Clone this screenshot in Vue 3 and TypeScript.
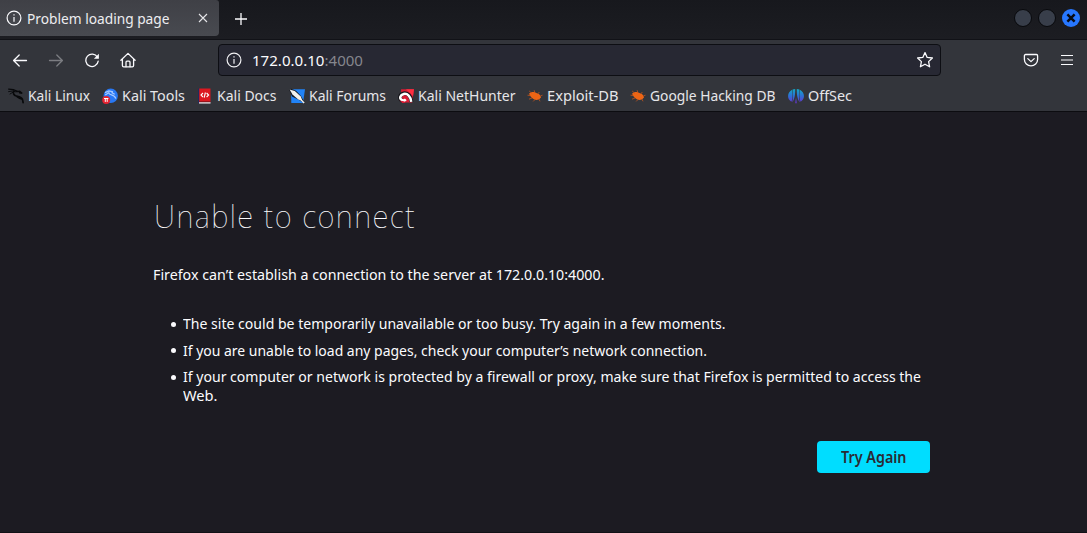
<script setup lang="ts">
import type { Directive } from 'vue'

interface Bookmark {
  id: string
  label: string
  width: number
  slot: number
}

const bookmarks: Bookmark[] = [
  { id: 'linux', label: 'Kali Linux', width: 62, slot: 93.5 },
  { id: 'tools', label: 'Kali Tools', width: 63, slot: 95.5 },
  { id: 'docs', label: 'Kali Docs', width: 59.5, slot: 92 },
  { id: 'forums', label: 'Kali Forums', width: 77, slot: 109 },
  { id: 'hunter', label: 'Kali NetHunter', width: 97.5, slot: 129 },
  { id: 'bug', label: 'Exploit-DB', width: 71.5, slot: 103 },
  { id: 'bug', label: 'Google Hacking DB', width: 125.5, slot: 158 },
  { id: 'offsec', label: 'OffSec', width: 44, slot: 76 },
]

const hints = [
  [{ text: 'The site could be temporarily unavailable or too busy. Try again in a few moments.', width: 542.5 }],
  [{ text: 'If you are unable to load any pages, check your computer’s network connection.', width: 524 }],
  [
    { text: 'If your computer or network is protected by a firewall or proxy, make sure that Firefox is permitted to access the', width: 738 },
    { text: 'Web.', width: 34.5 },
  ],
]

// Condenses a line of text horizontally to the given advance width.
const vFit: Directive<HTMLElement, number> = {
  mounted(el, { value }) {
    const natural = el.getBoundingClientRect().width
    if (natural > 0) el.style.transform = `scaleX(${value / natural})`
  },
}
</script>

<template>
  <div class="window">
    <header class="tabs">
      <div class="tab">
        <svg class="tab-info" width="16" height="16" viewBox="0 0 16 16" fill="none" stroke="#fbfbfe" stroke-width="1.2">
          <circle cx="8" cy="8" r="6.9" /><path d="M8 7v4.8M8 4.2v1.4" />
        </svg>
        <span class="tab-title"><span v-fit="142.5" class="fit">Problem loading page</span></span>
        <svg class="tab-close" width="10" height="10" viewBox="0 0 10 10" stroke="#e6e6e9" stroke-width="1.1">
          <path d="M1 1l8 8M9 1L1 9" />
        </svg>
      </div>
      <svg class="new-tab" width="14" height="14" viewBox="0 0 14 14" stroke="#fbfbfe" stroke-width="1.3">
        <path d="M7 1v12M1 7h12" />
      </svg>
      <div class="controls">
        <i class="control"></i>
        <i class="control"></i>
        <svg width="18" height="18" viewBox="0 0 18 18">
          <circle cx="9" cy="9" r="9" fill="#2777ff" />
          <path d="M5.4 5.4l7.2 7.2M12.6 5.4l-7.2 7.2" stroke="#080b14" stroke-width="2.5" />
        </svg>
      </div>
    </header>

    <nav class="toolbar">
      <div class="nav-row">
        <svg class="back" width="16" height="16" viewBox="0 0 16 16" fill="none" stroke="#fbfbfe" stroke-width="1.3" stroke-linecap="round" stroke-linejoin="round">
          <path d="M14.5 8.5H1.8M7.2 3L1.6 8.5 7.2 14" />
        </svg>
        <svg class="forward" width="16" height="16" viewBox="0 0 16 16" fill="none" stroke="#7c7d82" stroke-width="1.3" stroke-linecap="round" stroke-linejoin="round">
          <path d="M1.5 8.5h12.7M8.8 3l5.6 5.5L8.8 14" />
        </svg>
        <svg class="reload" width="16" height="16" viewBox="0 0 16 16" fill="none" stroke="#fbfbfe" stroke-width="1.3">
          <path d="M13.4 5.2A6.2 6.2 0 1 0 14.2 9.2" stroke-linecap="round" />
          <path d="M14.9 1.8v5h-5z" fill="#fbfbfe" stroke="none" />
        </svg>
        <svg class="home" width="16" height="16" viewBox="0 0 16 16" fill="none" stroke="#fbfbfe" stroke-width="1.3" stroke-linejoin="round" stroke-linecap="round">
          <path d="M.9 8.2L8 1.4l7.1 6.8M2.4 7.3v6.3c0 .9.4 1.3 1.3 1.3h8.6c.9 0 1.3-.4 1.3-1.3V7.3" />
          <path d="M6 14.7v-4.4c0-.7.4-1.1 1-1.1h2c.6 0 1 .4 1 1.1v4.4" />
        </svg>
        <div class="urlbar">
          <svg class="site-info" width="16" height="16" viewBox="0 0 16 16" fill="none" stroke="#f0f0f3" stroke-width="1.2">
            <circle cx="8" cy="8" r="6.9" /><path d="M8 7v4.8M8 4.2v1.4" />
          </svg>
          <span class="address"><span v-fit="111" class="fit">172.0.0.10<span class="port">:4000</span></span></span>
          <svg class="star" width="18" height="18" viewBox="0 0 18 18" fill="none" stroke="#fbfbfe" stroke-width="1.3" stroke-linejoin="round">
            <path d="M9 1.6l2.2 4.8 5.2.6-3.8 3.6 1 5.2L9 13.2l-4.6 2.6 1-5.2L1.6 7l5.2-.6z" />
          </svg>
        </div>
        <svg class="pocket" width="16" height="16" viewBox="0 0 16 16" fill="none" stroke="#fbfbfe" stroke-width="1.3" stroke-linecap="round" stroke-linejoin="round">
          <path d="M2.6 2.5h10.8c.7 0 1.2.5 1.2 1.2V7.5a6.6 6.3 0 0 1-13.2 0V3.7c0-.7.5-1.2 1.2-1.2z" /><path d="M4.8 6.6L8 9.6l3.2-3" />
        </svg>
        <svg class="menu" width="12" height="12" viewBox="0 0 12 12" stroke="#fbfbfe" stroke-width="1.2">
          <path d="M0 1.5h12M0 6h12M0 10.5h12" />
        </svg>
      </div>

      <div class="bookmarks">
        <div v-for="item in bookmarks" :key="item.label" class="bookmark" :style="{ width: item.slot + 'px' }">
          <svg class="favicon" width="16" height="16" viewBox="0 0 16 16">
            <g v-if="item.id === 'linux'" fill="none" stroke="#08090b" stroke-linecap="round">
              <path d="M.6 1.2l4.8.4 4 1.6" stroke-width="1.2" />
              <path d="M.6 3.6l4-.6 3 .8M2 6l3-1.8" stroke-width=".9" />
              <path d="M5.8 3C5 5.4 5.6 7.4 8.2 8c2.8.6 5 .6 6.2 3.2.4 1 .6 2.2.7 3.4" stroke-width="1.7" />
              <path d="M8.4 3.6l3.2-.3 2.6 2-2.6-.5M9 8.6c1.5 1.2 3.3 2.2 4.6 2.4" stroke-width="1.4" />
            </g>
            <g v-else-if="item.id === 'tools'">
              <circle cx="8.7" cy="7.8" r="7.2" fill="#2878f4" />
              <path d="M3 4.6l4-1.7 4 .9M3.2 7l3.6-2.2c.6 3 5.8 1 7 5.9M9.5 4.4l3.2 1.8" fill="none" stroke="#a9cbff" stroke-width="1.2" />
              <circle cx="4.2" cy="12" r="4" fill="#e52331" />
              <path d="M2 10.5h4.4M3.3 10.5v3.4M5.2 10.5v3.4" stroke="#fff" stroke-width="1" />
            </g>
            <g v-else-if="item.id === 'docs'">
              <path d="M1 .6h2v14.6H1z" fill="#222a5c" />
              <path d="M2.2.5h11.3v13.2H2.2z" fill="#dc1820" />
              <path d="M2 14h11.5v1.6H2z" fill="#dadbe0" /><path d="M2 13.3h11.5v.9H2z" fill="#8e1019" />
              <path d="M6 5L4 7l2 2M9.6 5l2 2-2 2M8.4 4.5L7.2 9.6" fill="none" stroke="#fff" stroke-width="1.1" />
            </g>
            <g v-else-if="item.id === 'forums'">
              <path d="M2 1.3h14L14 15H2.3z" fill="#2183f7" />
              <path d="M0 1.6L2.2.8l4.8 2 5 5.2 4 7.4-6.3-3.6L3 8.4z" fill="#15181f" />
              <path d="M.6 1.4l5.2 1.6 6 5.4 1.6 4.4-4.2-1.2-5.7-5z" fill="#f1f1ee" />
              <path d="M11 10.8l4.2 4.2" stroke="#f1f1ee" stroke-width="1.4" />
            </g>
            <g v-else-if="item.id === 'hunter'">
              <path d="M3 1.2h13l-1.8 13.3H4z" fill="#d91c34" /><path d="M8 1.2h8L15 8z" fill="#ff2e40" />
              <path d="M13.4 14C13.2 8.2 9.6 4.6 5.6 5.4 1.4 6.3 1.2 11 3.6 12.5" fill="none" stroke="#15151b" stroke-width="4" />
              <path d="M13.2 13.8C12.8 8.4 9.4 5.2 5.8 5.9 2 6.7 1.4 10.2 3.4 11.7c1.6 1.2 3.4.6 4.4-.4" fill="none" stroke="#fff" stroke-width="2.5" />
              <path d="M1.5 12.6l3 2.4h3l-2-1.8z" fill="#d91c34" />
            </g>
            <g v-else-if="item.id === 'bug'">
              <path d="M2 5.8C4 3.4 7.6 3.2 10.6 5.6c2 .6 3 1.9 3.4 3.9l-1.8 1.7C9.4 13 6 11.7 3.8 8.8z" fill="#ee6515" />
              <path d="M4.4 5L2.2 3M7.8 4.4L7.1 2.2M10.6 6l1.8-2M5 10l-3 1.2M8 11.5l-1.8 1.9M11.8 11l1.2 2.3M3 7.5L.5 7.2M13.4 8l2.1-.8" stroke="#b3511f" stroke-width=".9" />
            </g>
            <g v-else>
              <defs>
                <linearGradient id="petal" gradientUnits="userSpaceOnUse" x1="0" y1="1" x2="0" y2="15">
                  <stop offset="0" stop-color="#13a9c6" /><stop offset=".5" stop-color="#2d70d5" /><stop offset="1" stop-color="#6831d2" />
                </linearGradient>
              </defs>
              <g fill="url(#petal)">
                <path d="M4.2 1.8C-1.2 4.5-1.2 11 3.4 13.8 4.8 10.5 4.8 5.6 4.2 1.8z" />
                <path d="M4.6 1.6L7.2.9C7.3 6 6.8 11.2 4.2 14.2 5.3 10.4 5.2 5.2 4.6 1.6z" />
                <path d="M11.8 1.8c5.4 2.7 5.4 9.2.8 12-1.4-3.3-1.4-8.2-.8-12z" />
                <path d="M11.4 1.6L8.8.9c-.1 5.1.4 10.3 3 13.3-1.1-3.8-1-9-.4-12.6z" />
                <path d="M8 9.5l.8 5.7H7.2z" />
              </g>
            </g>
          </svg>
          <span v-fit="item.width" class="fit">{{ item.label }}</span>
        </div>
      </div>
    </nav>

    <main class="page">
      <h1><span v-fit="262" class="fit">Unable to connect</span></h1>
      <p><span v-fit="451.5" class="fit">Firefox can’t establish a connection to the server at 172.0.0.10:4000.</span></p>
      <ul>
        <li v-for="(hint, index) in hints" :key="index">
          <div v-for="line in hint" :key="line.text" class="line">
            <span v-fit="line.width" class="fit">{{ line.text }}</span>
          </div>
        </li>
      </ul>
      <button type="button"><span v-fit="65.5" class="fit">Try Again</span></button>
    </main>
  </div>
</template>

<style>
body {
  margin: 0;
  overflow: hidden;
  background: #1c1b22;
}
</style>

<style scoped>
* { box-sizing: border-box; }
svg { display: block; flex: none; }
.window {
  width: 1087px;
  height: 533px;
  display: flex;
  flex-direction: column;
  color: #fbfbfe;
  background: #1c1b22;
  font-family: "Noto Sans", sans-serif;
  font-size: 15.2px;
  border-bottom: 1px solid #111116;
}
.fit {
  display: inline-block;
  white-space: nowrap;
  transform-origin: 0 50%;
}
.tabs {
  height: 40px;
  display: flex;
  align-items: flex-start;
  background: linear-gradient(#17181d, #1c1d22);
  border-bottom: 1px solid #111217;
}
.tab {
  width: 219px;
  height: 36px;
  display: flex;
  align-items: center;
  background: linear-gradient(#3f4046, #484a50);
  border-radius: 0 3px 4px 0;
  color: #ededf0;
}
.tab-info { margin-left: 6px; }
.tab-title { width: 170.5px; margin-left: 5px; line-height: 20px; }
.new-tab { margin: 12px 0 0 14.5px; }
.controls { display: flex; gap: 6px; margin: 9px 7px 0 auto; }
.control {
  width: 18px;
  height: 18px;
  border-radius: 50%;
  background: #383e4a;
  border: 1px solid #08090c;
}
.toolbar {
  height: 72px;
  background: #33353b;
  border-bottom: 1px solid #0c0c10;
}
.nav-row { height: 40px; display: flex; align-items: center; }
.back { margin-left: 12px; }
.forward { margin-left: 20px; }
.reload { margin-left: 20px; }
.home { margin-left: 19.5px; }
.urlbar {
  width: 723px;
  height: 32px;
  margin-left: 82.5px;
  display: flex;
  align-items: center;
  background: #272833;
  border: 1px solid #0d0e13;
  border-radius: 4px;
}
.site-info { margin-left: 6.5px; }
.address { margin-left: 10.5px; line-height: 20px; flex: 1; }
.port { color: #85868d; }
.star { margin-right: 6px; }
.pocket { margin-left: 82px; }
.menu { margin-left: 22px; }
.bookmarks {
  height: 31px;
  display: flex;
  align-items: center;
  padding: 0 0 1px 8px;
  line-height: 20px;
  color: #e6e6e9;
}
.bookmark { flex: none; display: flex; align-items: center; gap: 4px; }
.favicon { position: relative; top: 1px; }
.page {
  width: 777px;
  margin-left: 153px;
  padding-top: 80px;
  display: flex;
  flex-direction: column;
  font-size: 15.3px;
}
h1 {
  margin: 0 0 0 .5px;
  height: 48px;
  line-height: 48px;
  font-size: 32px;
  font-weight: 100;
  letter-spacing: 1.6px;
}
p { margin: 24px 0 0; height: 20px; line-height: 20px; }
ul { margin: 30px 0 0; padding: 0 0 0 30px; list-style: none; }
li { position: relative; margin-bottom: 7.5px; line-height: 19px; }
li::before {
  content: "";
  position: absolute;
  left: -12.5px;
  top: 7.5px;
  width: 5px;
  height: 5px;
  border-radius: 50%;
  background: #fbfbfe;
}
.line { height: 19px; }
button {
  width: 113px;
  height: 32px;
  margin: 28.5px 0 0 664px;
  padding: 0 0 0 23.5px;
  text-align: left;
  border: 0;
  border-radius: 4px;
  background: #00ddff;
  color: #2b2a33;
  font: 600 15.3px/20px "Noto Sans", sans-serif;
}
</style>
